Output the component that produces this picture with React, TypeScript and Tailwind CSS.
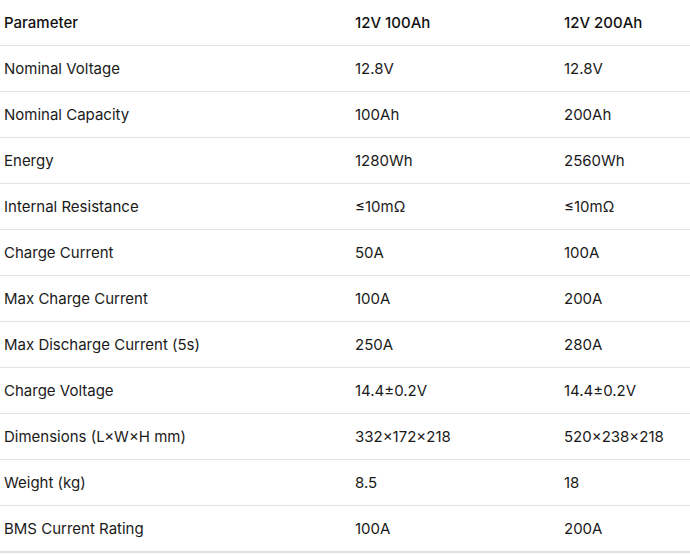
const rows: [string, string, string][] = [
  ['Nominal Voltage', '12.8V', '12.8V'],
  ['Nominal Capacity', '100Ah', '200Ah'],
  ['Energy', '1280Wh', '2560Wh'],
  ['Internal Resistance', '≤10mΩ', '≤10mΩ'],
  ['Charge Current', '50A', '100A'],
  ['Max Charge Current', '100A', '200A'],
  ['Max Discharge Current (5s)', '250A', '280A'],
  ['Charge Voltage', '14.4±0.2V', '14.4±0.2V'],
  ['Dimensions (L×W×H mm)', '332×172×218', '520×238×218'],
  ['Weight (kg)', '8.5', '18'],
  ['BMS Current Rating', '100A', '200A'],
];

export default function App() {
  return (
    <div className="w-[690px] bg-white font-['Inter',sans-serif] text-[15px] leading-[21px] text-[#1a1a1a]">
      <table className="w-full table-fixed border-collapse text-left">
        <colgroup>
          <col className="w-[351px]" />
          <col className="w-[209px]" />
          <col />
        </colgroup>
        <thead>
          <tr className="border-b border-[#e3e3e3]">
            <th className="px-[4px] py-[12px] font-medium text-[#111]">Parameter</th>
            <th className="px-[4px] py-[12px] font-medium text-[#111]">12V 100Ah</th>
            <th className="px-[4px] py-[12px] font-medium text-[#111]">12V 200Ah</th>
          </tr>
        </thead>
        <tbody>
          {rows.map(([name, a, b], i) => (
            <tr
              key={name}
              className={i === rows.length - 1 ? 'border-b-2 border-[#e0e0e0]' : 'border-b border-[#e3e3e3]'}
            >
              <td className="px-[4px] py-[12px] font-normal">{name}</td>
              <td className="px-[4px] py-[12px] font-normal">{a}</td>
              <td className="px-[4px] py-[12px] font-normal">{b}</td>
            </tr>
          ))}
        </tbody>
      </table>
    </div>
  );
}
